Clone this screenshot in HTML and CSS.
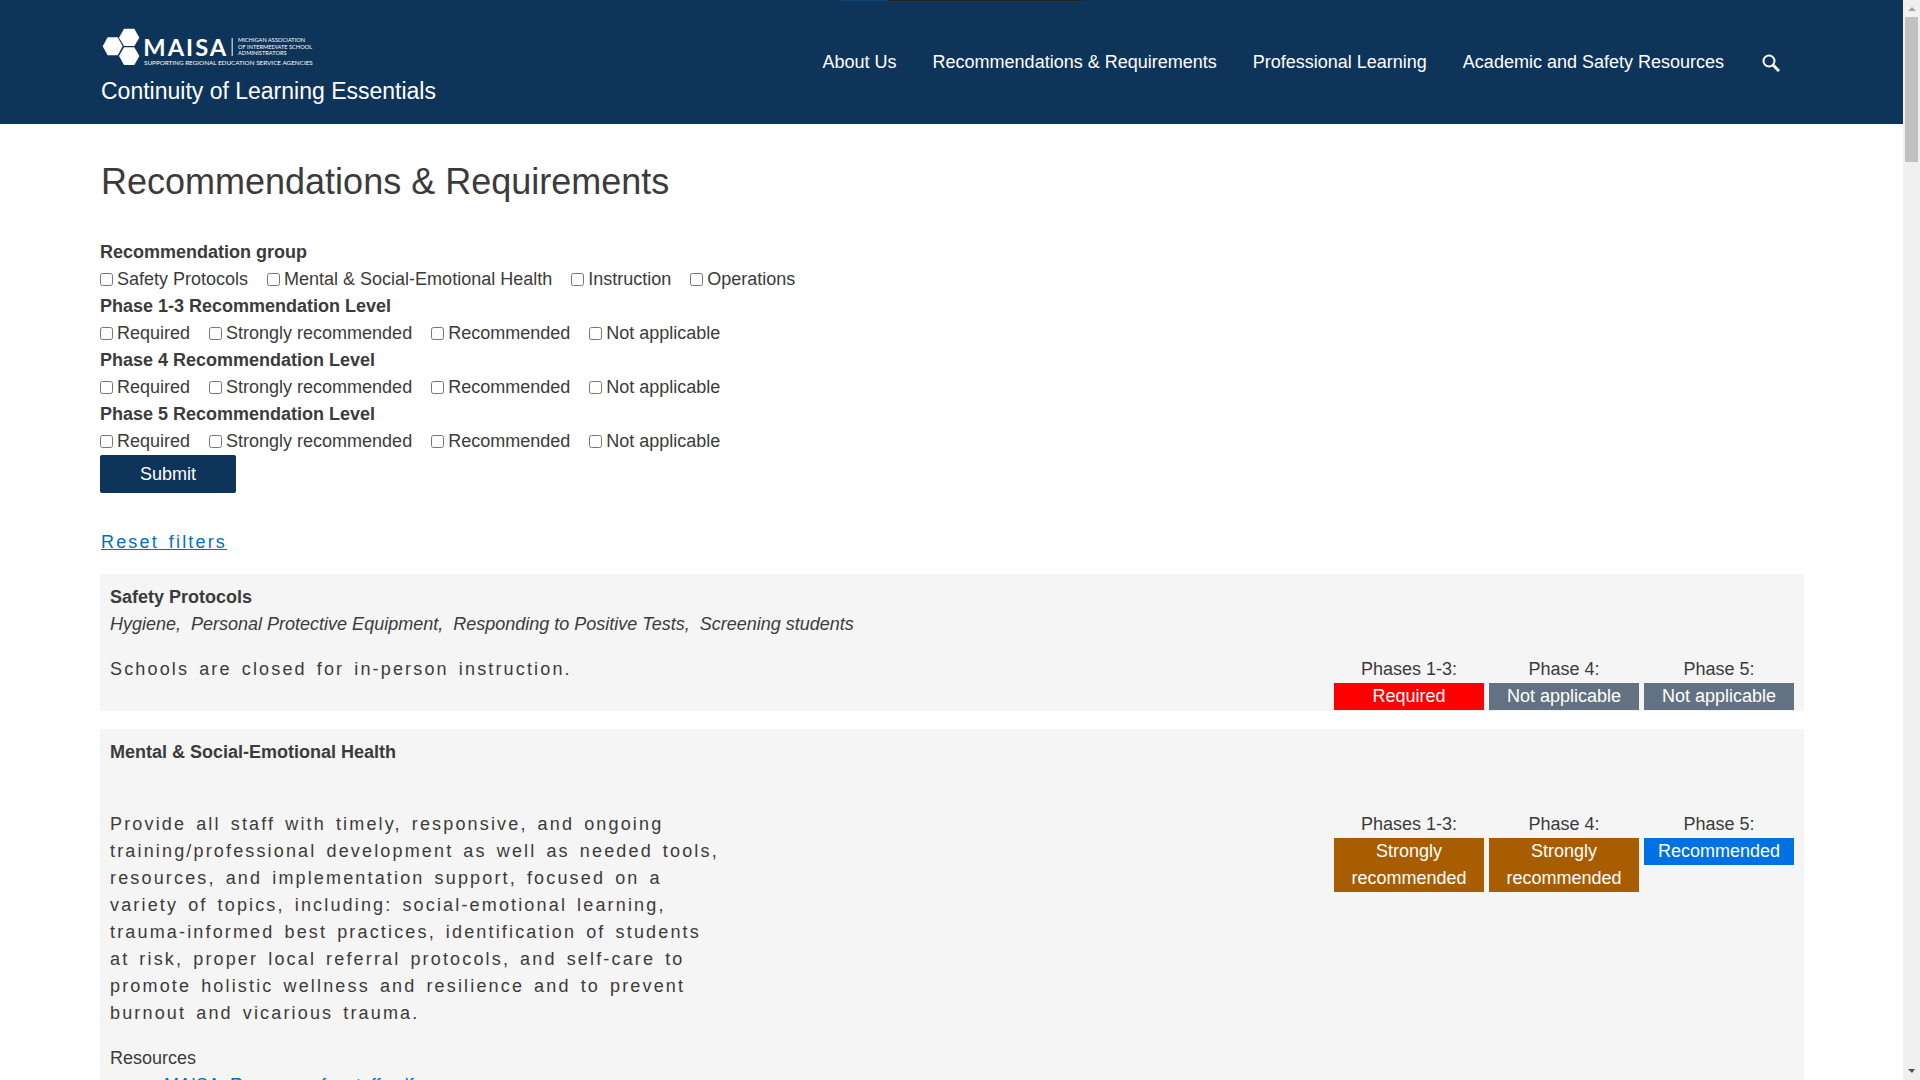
FILE: index.html
```html
<!DOCTYPE html>
<html lang="en">
<head>
<meta charset="utf-8">
<title>Recommendations &amp; Requirements</title>
<link rel="stylesheet" href="styles.css">
</head>
<body>
<header class="site-header">
  <div class="brand">
    <svg class="logo" viewBox="0 0 648 120" width="216" height="40" role="img" aria-label="MAISA">
      <g fill="#fff">
        <path d="M17 28h30l15 27-15 27H17L2 55z"/>
        <path d="M66 2h31l15 27-15 25H66L51 29z"/>
        <path d="M66 58h31l15 26-15 27H66L51 84z"/>
        <path d="M389 30h3v54h-3z"/>
      </g>
      <text class="logo-name" x="124" y="83">MAISA</text>
      <text class="logo-line" x="408" y="42">MICHIGAN ASSOCIATION</text>
      <text class="logo-line" x="408" y="62">OF INTERMEDIATE SCHOOL</text>
      <text class="logo-line" x="408" y="82">ADMINISTRATORS</text>
      <text class="logo-tag" x="126" y="110">SUPPORTING REGIONAL EDUCATION SERVICE AGENCIES</text>
    </svg>
    <a class="site-title" href="#">Continuity of Learning Essentials</a>
  </div>
  <nav class="nav">
    <a href="#">About Us</a>
    <a href="#">Recommendations &amp; Requirements</a>
    <a href="#">Professional Learning</a>
    <a href="#">Academic and Safety Resources</a>
    <button class="search" type="button" aria-label="Search">
      <svg viewBox="0 0 18 20" width="18" height="20" fill="none" stroke="#fff"><circle cx="7" cy="9" r="5.500" stroke-width="2"/><path d="M11 13l6 6" stroke-width="3"/></svg>
    </button>
  </nav>
  <div class="share-strip"></div>
</header>

<main class="main">
  <h1>Recommendations &amp; Requirements</h1>
  <form class="filters">
    <fieldset>
      <legend>Recommendation group</legend>
      <div class="options">
        <label><input type="checkbox">Safety Protocols</label>
        <label><input type="checkbox">Mental &amp; Social-Emotional Health</label>
        <label><input type="checkbox">Instruction</label>
        <label><input type="checkbox">Operations</label>
      </div>
    </fieldset>
    <fieldset>
      <legend>Phase 1-3 Recommendation Level</legend>
      <div class="options">
        <label><input type="checkbox">Required</label>
        <label><input type="checkbox">Strongly recommended</label>
        <label><input type="checkbox">Recommended</label>
        <label><input type="checkbox">Not applicable</label>
      </div>
    </fieldset>
    <fieldset>
      <legend>Phase 4 Recommendation Level</legend>
      <div class="options">
        <label><input type="checkbox">Required</label>
        <label><input type="checkbox">Strongly recommended</label>
        <label><input type="checkbox">Recommended</label>
        <label><input type="checkbox">Not applicable</label>
      </div>
    </fieldset>
    <fieldset>
      <legend>Phase 5 Recommendation Level</legend>
      <div class="options">
        <label><input type="checkbox">Required</label>
        <label><input type="checkbox">Strongly recommended</label>
        <label><input type="checkbox">Recommended</label>
        <label><input type="checkbox">Not applicable</label>
      </div>
    </fieldset>
    <button class="submit" type="button">Submit</button>
  </form>
  <p class="reset"><a href="#">Reset filters</a></p>

  <article class="card">
    <h2>Safety Protocols</h2>
    <div class="topics">Hygiene,&nbsp; Personal Protective Equipment,&nbsp; Responding to Positive Tests,&nbsp; Screening students</div>
    <div class="card-body">
      <div class="text"><p>Schools are closed for in-person instruction.</p></div>
      <dl class="phases">
        <div><dt>Phases 1-3:</dt><dd class="required">Required</dd></div>
        <div><dt>Phase 4:</dt><dd class="na">Not applicable</dd></div>
        <div><dt>Phase 5:</dt><dd class="na">Not applicable</dd></div>
      </dl>
    </div>
  </article>

  <article class="card">
    <h2>Mental &amp; Social-Emotional Health</h2>
    <div class="topics"></div>
    <div class="card-body">
      <div class="text">
        <p>Provide all staff with timely, responsive, and ongoing training/professional development as well as needed tools, resources, and implementation support, focused on a variety of topics, including: social-emotional learning, trauma-informed best practices, identification of students at risk, proper local referral protocols, and self-care to promote holistic wellness and resilience and to prevent burnout and vicarious trauma.</p>
        <div>Resources</div>
        <ul class="resources"><li><a href="#">MAISA: Resources for staff self-care</a></li></ul>
      </div>
      <dl class="phases">
        <div><dt>Phases 1-3:</dt><dd class="strong">Strongly recommended</dd></div>
        <div><dt>Phase 4:</dt><dd class="strong">Strongly recommended</dd></div>
        <div><dt>Phase 5:</dt><dd class="recommended">Recommended</dd></div>
      </dl>
    </div>
  </article>
</main>
<div class="scrollbar" aria-hidden="true">
  <svg viewBox="0 0 17 17" width="17" height="17"><path d="M5 11l4-4 4 4z" fill="#a3a3a3"/></svg>
  <div class="thumb"></div>
  <svg viewBox="0 0 17 17" width="17" height="17"><path d="M5 6h7l-3 4z" fill="#505050"/></svg>
</div>
</body>
</html>
```
FILE: styles.css
```css
* { box-sizing: border-box; }

html { height: 100%; overflow: hidden; }

body {
  height: 100%;
  margin: 0;
  padding-right: 17px;
  overflow: hidden;
  background: #fff;
  color: #3b3b3b;
  font: 18px/27px "Liberation Sans", Arial, sans-serif;
}

.site-header {
  position: relative;
  display: flex;
  justify-content: space-between;
  align-items: center;
  min-height: 124px;
  padding: 0 123px 0 101px;
  background: #0f3459;
}

.brand { display: flex; flex-direction: column; padding-top: 9px; }
.logo { display: block; margin-left: 1px; }
.logo text { font-family: Lato, sans-serif; fill: #fff; }
.logo .logo-name { font-size: 71px; font-weight: 700; letter-spacing: 6px; }
.logo .logo-line { font-size: 17px; }
.logo .logo-tag { font-size: 19px; }
.site-title { margin-top: 10px; color: #fff; font-size: 23px; text-decoration: none; }

.nav { display: flex; align-items: center; gap: 36px; }
.nav a { color: #fff; text-decoration: none; }
.search { display: flex; margin-left: 2px; padding: 0; border: 0; background: none; }

.share-strip {
  position: absolute;
  top: 0;
  left: 840px;
  width: 242px;
  height: 1px;
  background: linear-gradient(to right, #0f4272 48px, #222 48px);
}

.main { padding: 33px 99px 0 100px; }

h1 { margin: 0 0 32px 1px; font-size: 36px; font-weight: 400; line-height: 50px; }

fieldset { margin: 0; padding: 0; border: 0; }
legend { padding: 0; font-weight: 700; }
.options { display: flex; flex-wrap: wrap; gap: 0 19px; }
.options label { display: flex; align-items: center; gap: 4px; }
.options input { width: 13px; height: 13px; margin: 0; }

.submit {
  display: block;
  width: 136px;
  height: 38px;
  border: 0;
  border-radius: 2px;
  background: #0f3459;
  color: #fff;
  font: inherit;
}

.reset { margin: 36px 1px 18px; }
p { margin: 0 0 18px; letter-spacing: 0.12em; word-spacing: 0.16em; }
a { color: #0071bc; }

.card { margin-bottom: 18px; padding: 10px 10px 0; background: #f5f5f5; }
.card h2 { margin: 0; font-size: 18px; line-height: 27px; }
.topics { min-height: 27px; margin-bottom: 18px; font-style: italic; }
.card-body { display: flex; justify-content: space-between; align-items: flex-start; }
.text { flex: 0 1 616px; }
.phases { display: flex; align-items: flex-start; gap: 5px; margin: 0; padding-bottom: 1px; text-align: center; }
.phases div { width: 150px; }
.phases dd { margin: 0; padding: 0 10px; color: #fff; }
.required { background: #f00; }
.na { background: #637282; }
.strong { background: #a85d00; }
.recommended { background: #0071e3; }
.resources { margin: 0; padding-left: 54px; list-style: none; }

.scrollbar {
  position: fixed;
  top: 0;
  right: 0;
  bottom: 0;
  display: flex;
  flex-direction: column;
  width: 17px;
  background: #f0f0f0;
}
.thumb { height: 145px; margin: 0 2px auto; background: #c1c1c1; }
```
